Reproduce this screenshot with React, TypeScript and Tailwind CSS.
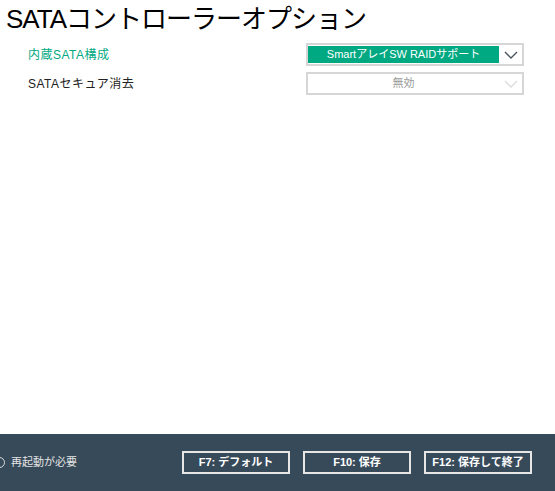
const FONT = '"Liberation Sans", "Noto Sans CJK JP", sans-serif';

function Chevron({ color }: { color: string }) {
  return (
    <svg width="14" height="8" viewBox="0 0 14 8" fill="none">
      <path d="M1 1l6 6 6-6" stroke={color} strokeWidth="1.4" />
    </svg>
  );
}

function SelectBox({ value, active }: { value: string; active?: boolean }) {
  return (
    <div className="flex h-[23px] w-[218px] items-stretch border-2 border-[#d6d6d6] bg-white py-[1px]">
      <div
        className={`flex w-[191px] items-center justify-center text-[11px] ${
          active ? 'bg-[#01a982] text-white' : 'text-[#9a9a9a]'
        }`}
      >
        {value}
      </div>
      <div className="flex flex-1 items-center justify-center">
        <Chevron color={active ? '#4a5560' : '#dcdcdc'} />
      </div>
    </div>
  );
}

export default function App() {
  const buttons = ['F7: デフォルト', 'F10: 保存', 'F12: 保存して終了'];

  return (
    <div className="flex h-[491px] w-[555px] flex-col overflow-hidden bg-white" style={{ fontFamily: FONT }}>
      <div className="flex h-[434px] flex-col">
        <h1 className="pl-[6px] pt-[3px] text-[26px] leading-[32px] tracking-[-1px] font-normal text-black">
          SATAコントローラーオプション
        </h1>
        <div className="mt-[8px] flex flex-col gap-[6px] pl-[28px]">
          <div className="flex h-[23px] items-center">
            <div className="w-[278px] text-[12px] tracking-[0.5px] text-[#01a982]">内蔵SATA構成</div>
            <SelectBox value="SmartアレイSW RAIDサポート" active />
          </div>
          <div className="flex h-[23px] items-center">
            <div className="w-[278px] text-[12px] tracking-[0.5px] text-[#222]">SATAセキュア消去</div>
            <SelectBox value="無効" />
          </div>
        </div>
      </div>
      <div className="flex h-[57px] items-center bg-[#374a5a]">
        <div className="ml-[-6px] h-[11px] w-[11px] rounded-full border border-[#dcdcdc]" />
        <span className="ml-[6px] text-[11px] text-[#e4e4e4]">再起動が必要</span>
        <div className="ml-auto mr-[23px] flex gap-[13px]">
          {buttons.map((b) => (
            <button
              key={b}
              className="flex h-[23px] w-[108px] items-center justify-center border-2 border-[#e6e6e6] text-[11px] font-bold text-white"
            >
              {b}
            </button>
          ))}
        </div>
      </div>
    </div>
  );
}
